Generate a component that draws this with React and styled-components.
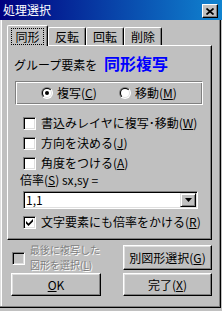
import React from "react";
import styled, { createGlobalStyle } from "styled-components";

const GlobalStyle = createGlobalStyle`
  html, body {
    margin: 0;
    padding: 0;
    background: #c0c0c0;
  }
  body {
    font-family: "Noto Sans CJK JP", "Noto Sans", sans-serif;
    font-size: 12px;
    color: #000;
  }
  * {
    box-sizing: border-box;
  }
`;

const tabs = ["同形", "反転", "回転", "削除"];

const App = () => {
  return (
    <Window>
      <GlobalStyle />
      <TitleBar>
        <Title>処理選択</Title>
        <CloseButton>
          <svg width="8" height="7" viewBox="0 0 8 7">
            <path d="M0.5 0.5 L7.5 6.5 M7.5 0.5 L0.5 6.5" stroke="#000" strokeWidth="1.7" />
          </svg>
        </CloseButton>
      </TitleBar>
      <Body>
        <TabStrip>
          {tabs.map((t, i) => (
            <Tab key={t} $active={i === 0}>
              {i === 0 ? <Focus>{t}</Focus> : t}
            </Tab>
          ))}
        </TabStrip>
        <Panel>
          <Heading>
            グループ要素を <Mode>同形複写</Mode>
          </Heading>
          <RadioGroup>
            <Option>
              <RadioIcon checked />
              <span>複写(<u>C</u>)</span>
            </Option>
            <Option>
              <RadioIcon />
              <span>移動(<u>M</u>)</span>
            </Option>
          </RadioGroup>
          <CheckRow $first>
            <CheckBox />
            <span>書込みレイヤに複写･移動(<u>W</u>)</span>
          </CheckRow>
          <CheckRow>
            <CheckBox />
            <span>方向を決める(<u>J</u>)</span>
          </CheckRow>
          <CheckRow>
            <CheckBox />
            <span>角度をつける(<u>A</u>)</span>
          </CheckRow>
          <FieldLabel>倍率(<u>S</u>) sx,sy =</FieldLabel>
          <Combo>
            <ComboText>1,1</ComboText>
            <DropButton>
              <svg width="7" height="4" viewBox="0 0 7 4">
                <polygon points="0,0 7,0 3.5,4" fill="#000" />
              </svg>
            </DropButton>
          </Combo>
          <CheckRow $tight>
            <CheckBox checked />
            <span>文字要素にも倍率をかける(<u>R</u>)</span>
          </CheckRow>
        </Panel>
        <Footer>
          <LastCopied>
            <CheckBox disabled />
            <DisabledText>
              <span>最後に複写した</span>
              <span>図形を選択(<u>L</u>)</span>
            </DisabledText>
          </LastCopied>
          <Button>別図形選択(<u>G</u>)</Button>
          <Button>
            <u>O</u>K
          </Button>
          <Button>完了(<u>X</u>)</Button>
        </Footer>
      </Body>
    </Window>
  );
};

function RadioIcon({ checked }) {
  return (
    <svg width="12" height="12" viewBox="0 0 12 12">
      <defs>
        <linearGradient id="radioOuter" x1="0" y1="0" x2="1" y2="1">
          <stop offset="0.5" stopColor="#808080" />
          <stop offset="0.5" stopColor="#ffffff" />
        </linearGradient>
        <linearGradient id="radioInner" x1="0" y1="0" x2="1" y2="1">
          <stop offset="0.5" stopColor="#000000" />
          <stop offset="0.5" stopColor="#dfdfdf" />
        </linearGradient>
      </defs>
      <circle cx="6" cy="6" r="6" fill="url(#radioOuter)" />
      <circle cx="6" cy="6" r="5" fill="url(#radioInner)" />
      <circle cx="6" cy="6" r="4" fill="#fff" />
      {checked && <circle cx="6" cy="6" r="2" fill="#000" />}
    </svg>
  );
}

function CheckBox({ checked, disabled }) {
  return (
    <Box $disabled={disabled}>
      {checked && (
        <svg width="7" height="7" viewBox="0 0 7 7">
          <polygon points="0,2 2.5,4.5 7,0 7,2.5 2.5,7 0,4.5" fill="#000" />
        </svg>
      )}
    </Box>
  );
}

const Window = styled.div`
  width: 222px;
  height: 308px;
  display: flex;
  flex-direction: column;
`;

const TitleBar = styled.div`
  height: 20px;
  flex-shrink: 0;
  display: flex;
  justify-content: space-between;
  align-items: flex-start;
  padding: 0 4px 0 3px;
  background: linear-gradient(90deg, #000080, #1084d0);
`;

const Title = styled.div`
  color: #fff;
  font-size: 12px;
  line-height: 20px;
`;

const CloseButton = styled.div`
  width: 16px;
  height: 14px;
  margin-top: 4px;
  display: flex;
  align-items: center;
  justify-content: center;
  background: #c0c0c0;
  border: 1px solid;
  border-color: #fff #000 #000 #fff;
  box-shadow: inset -1px -1px #808080;
`;

const Body = styled.div`
  flex: 1;
  width: 221px;
  display: flex;
  flex-direction: column;
  align-items: flex-start;
  padding: 5px 0 0 7px;
  background: #c0c0c0;
  border-right: 1px solid #000;
  border-bottom: 1px solid #000;
  box-shadow: inset -1px -1px #808080, inset 1px 0 #dfdfdf, inset 2px 0 #fff;
`;

const TabStrip = styled.div`
  display: flex;
  align-items: flex-end;
  height: 20px;
`;

const Tab = styled.div`
  position: relative;
  z-index: ${(p) => (p.$active ? 1 : 0)};
  width: ${(p) => (p.$active ? "41px" : "38px")};
  height: ${(p) => (p.$active ? "21px" : "18px")};
  margin-bottom: ${(p) => (p.$active ? "-1px" : "0")};
  display: flex;
  align-items: ${(p) => (p.$active ? "flex-start" : "center")};
  justify-content: center;
  padding-top: ${(p) => (p.$active ? "3px" : "0")};
  background: #c0c0c0;
  border-top: 1px solid #fff;
  border-left: 1px solid #fff;
  border-right: 1px solid #000;
  border-radius: 2px 2px 0 0;
  box-shadow: inset -1px 0 #808080;
  line-height: 15px;
`;

const Focus = styled.span`
  display: block;
  padding: 0 3px;
  outline: 1px dotted #000;
  outline-offset: 0;
  line-height: 15px;
`;

const Panel = styled.div`
  width: 205px;
  height: 195px;
  display: flex;
  flex-direction: column;
  align-items: flex-start;
  padding-top: 7px;
  border-top: 1px solid #fff;
  border-left: 1px solid #fff;
  border-right: 1px solid #000;
  border-bottom: 1px solid #000;
  box-shadow: inset -1px -1px #808080;
`;

const Heading = styled.div`
  display: flex;
  align-items: baseline;
  height: 20px;
  margin-left: 6px;
  line-height: 20px;
  white-space: pre;
`;

const Mode = styled.span`
  color: #0000ff;
  font-size: 16px;
  font-weight: bold;
  margin-left: 4px;
`;

const RadioGroup = styled.div`
  width: 188px;
  height: 24px;
  margin: 8px 0 0 7px;
  display: grid;
  grid-template-columns: 78px auto;
  align-items: center;
  padding-left: 25px;
  border: 1px solid;
  border-color: #808080 #fff #fff #808080;
  box-shadow: inset 1px 1px #fff, inset -1px -1px #808080;
`;

const Option = styled.div`
  display: flex;
  align-items: center;
  gap: 4px;
  line-height: 14px;
`;

const CheckRow = styled.div`
  display: flex;
  align-items: center;
  gap: 5px;
  height: 20px;
  margin-left: 15px;
  margin-top: ${(p) => (p.$first ? "8px" : p.$tight ? "3px" : "0")};
  line-height: 14px;
  white-space: nowrap;
`;

const Box = styled.span`
  width: 13px;
  height: 13px;
  flex-shrink: 0;
  display: flex;
  align-items: center;
  justify-content: center;
  background: ${(p) => (p.$disabled ? "#c0c0c0" : "#fff")};
  border: 1px solid;
  border-color: #808080 #fff #fff #808080;
  box-shadow: inset 1px 1px #000, inset -1px -1px #dfdfdf;
`;

const FieldLabel = styled.div`
  margin-left: 12px;
  line-height: 14px;
  height: 14px;
`;

const Combo = styled.div`
  width: 175px;
  height: 18px;
  margin: 4px 0 0 15px;
  display: flex;
  padding: 1px;
  background: #fff;
  border: 1px solid;
  border-color: #808080 #fff #fff #808080;
  box-shadow: inset 1px 1px #000, inset -1px -1px #dfdfdf;
`;

const ComboText = styled.div`
  flex: 1;
  padding-left: 1px;
  line-height: 14px;
`;

const DropButton = styled.div`
  width: 16px;
  height: 14px;
  display: flex;
  align-items: center;
  justify-content: center;
  background: #c0c0c0;
  border: 1px solid;
  border-color: #dfdfdf #000 #000 #dfdfdf;
  box-shadow: inset 1px 1px #fff, inset -1px -1px #808080;
`;

const Footer = styled.div`
  display: grid;
  grid-template-columns: 90px 89px;
  grid-template-rows: 25px 23px;
  column-gap: 22px;
  row-gap: 3px;
  margin: 5px 0 0 4px;
`;

const LastCopied = styled.div`
  display: flex;
  align-items: center;
  gap: 5px;
  padding: 2px 0 0 1px;
`;

const DisabledText = styled.div`
  display: flex;
  flex-direction: column;
  color: #808080;
  text-shadow: 1px 1px 0 #fff;
  font-size: 10px;
  line-height: 14.5px;
  margin-top: -2px;
  white-space: nowrap;
`;

const Button = styled.div`
  display: flex;
  align-items: center;
  justify-content: center;
  background: #c0c0c0;
  border: 1px solid;
  border-color: #fff #000 #000 #fff;
  box-shadow: inset -1px -1px #808080, inset 1px 1px #dfdfdf;
  line-height: 14px;
  white-space: nowrap;
`;

export default App;
